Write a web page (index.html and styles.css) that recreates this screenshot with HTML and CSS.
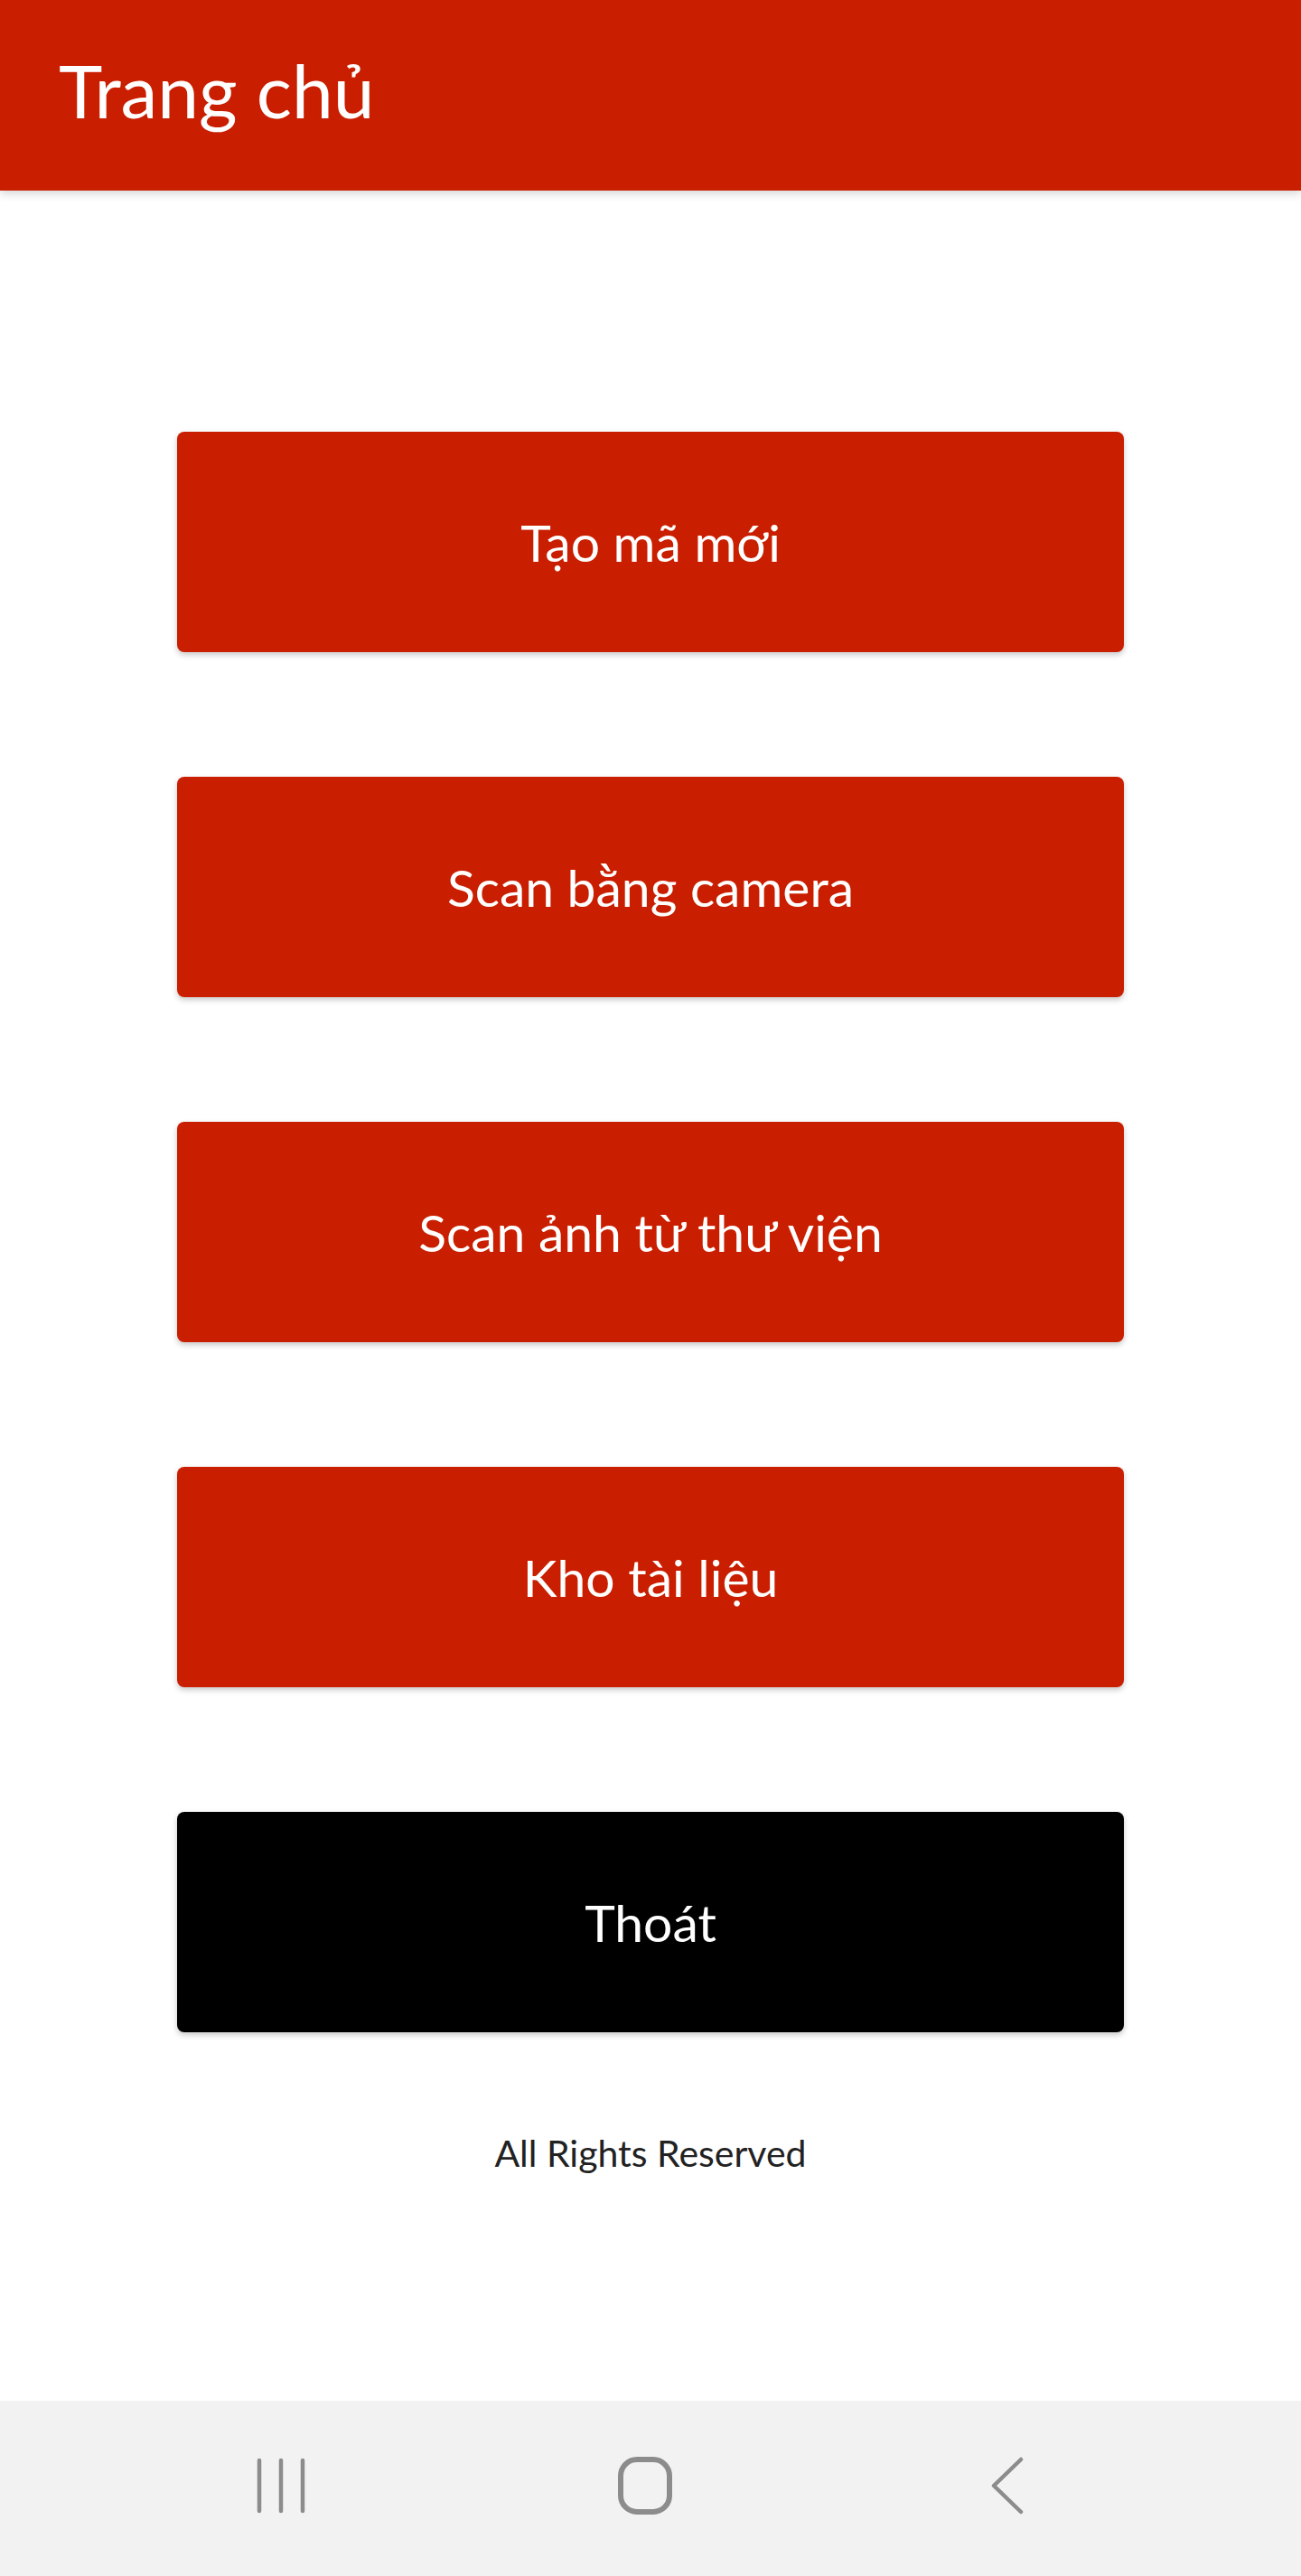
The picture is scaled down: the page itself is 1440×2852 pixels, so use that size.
FILE: index.html
```html
<!DOCTYPE html>
<html lang="vi">
<head>
<meta charset="utf-8">
<title>Trang chủ</title>
<link rel="stylesheet" href="styles.css">
</head>
<body>
<div class="page">
  <header class="appbar">
    <h1 class="appbar-title">Trang chủ</h1>
  </header>
  <main class="content">
    <div class="menu">
      <button class="btn btn-red">Tạo mã mới</button>
      <button class="btn btn-red">Scan bằng camera</button>
      <button class="btn btn-red">Scan ảnh từ thư viện</button>
      <button class="btn btn-red">Kho tài liệu</button>
      <button class="btn btn-black">Thoát</button>
    </div>
    <p class="footer-text">All Rights Reserved</p>
  </main>
  <nav class="navbar">
    <svg class="nav-icon" width="64" height="64" viewBox="0 0 64 64">
      <g stroke="#8c8c8c" stroke-width="4.5" stroke-linecap="round">
        <line x1="7" y1="4" x2="7" y2="60"/>
        <line x1="31" y1="4" x2="31" y2="60"/>
        <line x1="55" y1="4" x2="55" y2="60"/>
      </g>
    </svg>
    <svg class="nav-icon" width="64" height="68" viewBox="0 0 64 68">
      <rect x="5" y="5" width="54" height="58" rx="18" ry="18" fill="none" stroke="#8c8c8c" stroke-width="6"/>
    </svg>
    <svg class="nav-icon" width="64" height="64" viewBox="0 0 64 64">
      <polyline points="50,3 20,32 50,61" fill="none" stroke="#8c8c8c" stroke-width="4.5" stroke-linecap="round" stroke-linejoin="round"/>
    </svg>
  </nav>
</div>
</body>
</html>
```

FILE: styles.css
```css
* {
  box-sizing: border-box;
}

html, body {
  margin: 0;
  padding: 0;
  background: #ffffff;
}

body {
  font-family: Lato, "Noto Sans", "Open Sans", sans-serif;
}

.page {
  width: 1440px;
  height: 2852px;
  display: flex;
  flex-direction: column;
  overflow: hidden;
}

.appbar {
  height: 211px;
  flex: none;
  background: #c91e00;
  display: flex;
  align-items: center;
  padding-left: 65px;
  padding-bottom: 14px;
  box-shadow: 0 3px 10px rgba(0, 0, 0, 0.18);
  position: relative;
  z-index: 1;
}

.appbar-title {
  margin: 0;
  color: #ffffff;
  font-weight: 400;
  font-size: 82px;
  line-height: 1;
}

.content {
  flex: 1;
  display: flex;
  flex-direction: column;
  align-items: center;
  padding-top: 267px;
}

.menu {
  display: flex;
  flex-direction: column;
  gap: 138px;
}

.btn {
  width: 1048px;
  height: 244px;
  border: none;
  border-radius: 8px;
  color: #ffffff;
  font-family: Lato, "Noto Sans", "Open Sans", sans-serif;
  font-size: 57px;
  font-weight: 400;
  box-shadow: 0 3px 6px rgba(0, 0, 0, 0.22);
  padding: 0;
}

.btn-red {
  background: #c91e00;
}

.btn-black {
  background: #000000;
}

.footer-text {
  margin: 113px 0 0;
  font-size: 41px;
  color: #222222;
  line-height: 1;
}

.navbar {
  height: 194px;
  flex: none;
  background: #f2f2f2;
  display: flex;
  align-items: center;
  padding-bottom: 6px;
}

.navbar .nav-icon:nth-child(1) {
  margin-left: 280px;
}

.navbar .nav-icon:nth-child(2) {
  margin-left: 338px;
}

.navbar .nav-icon:nth-child(3) {
  margin-left: 334px;
}
```
